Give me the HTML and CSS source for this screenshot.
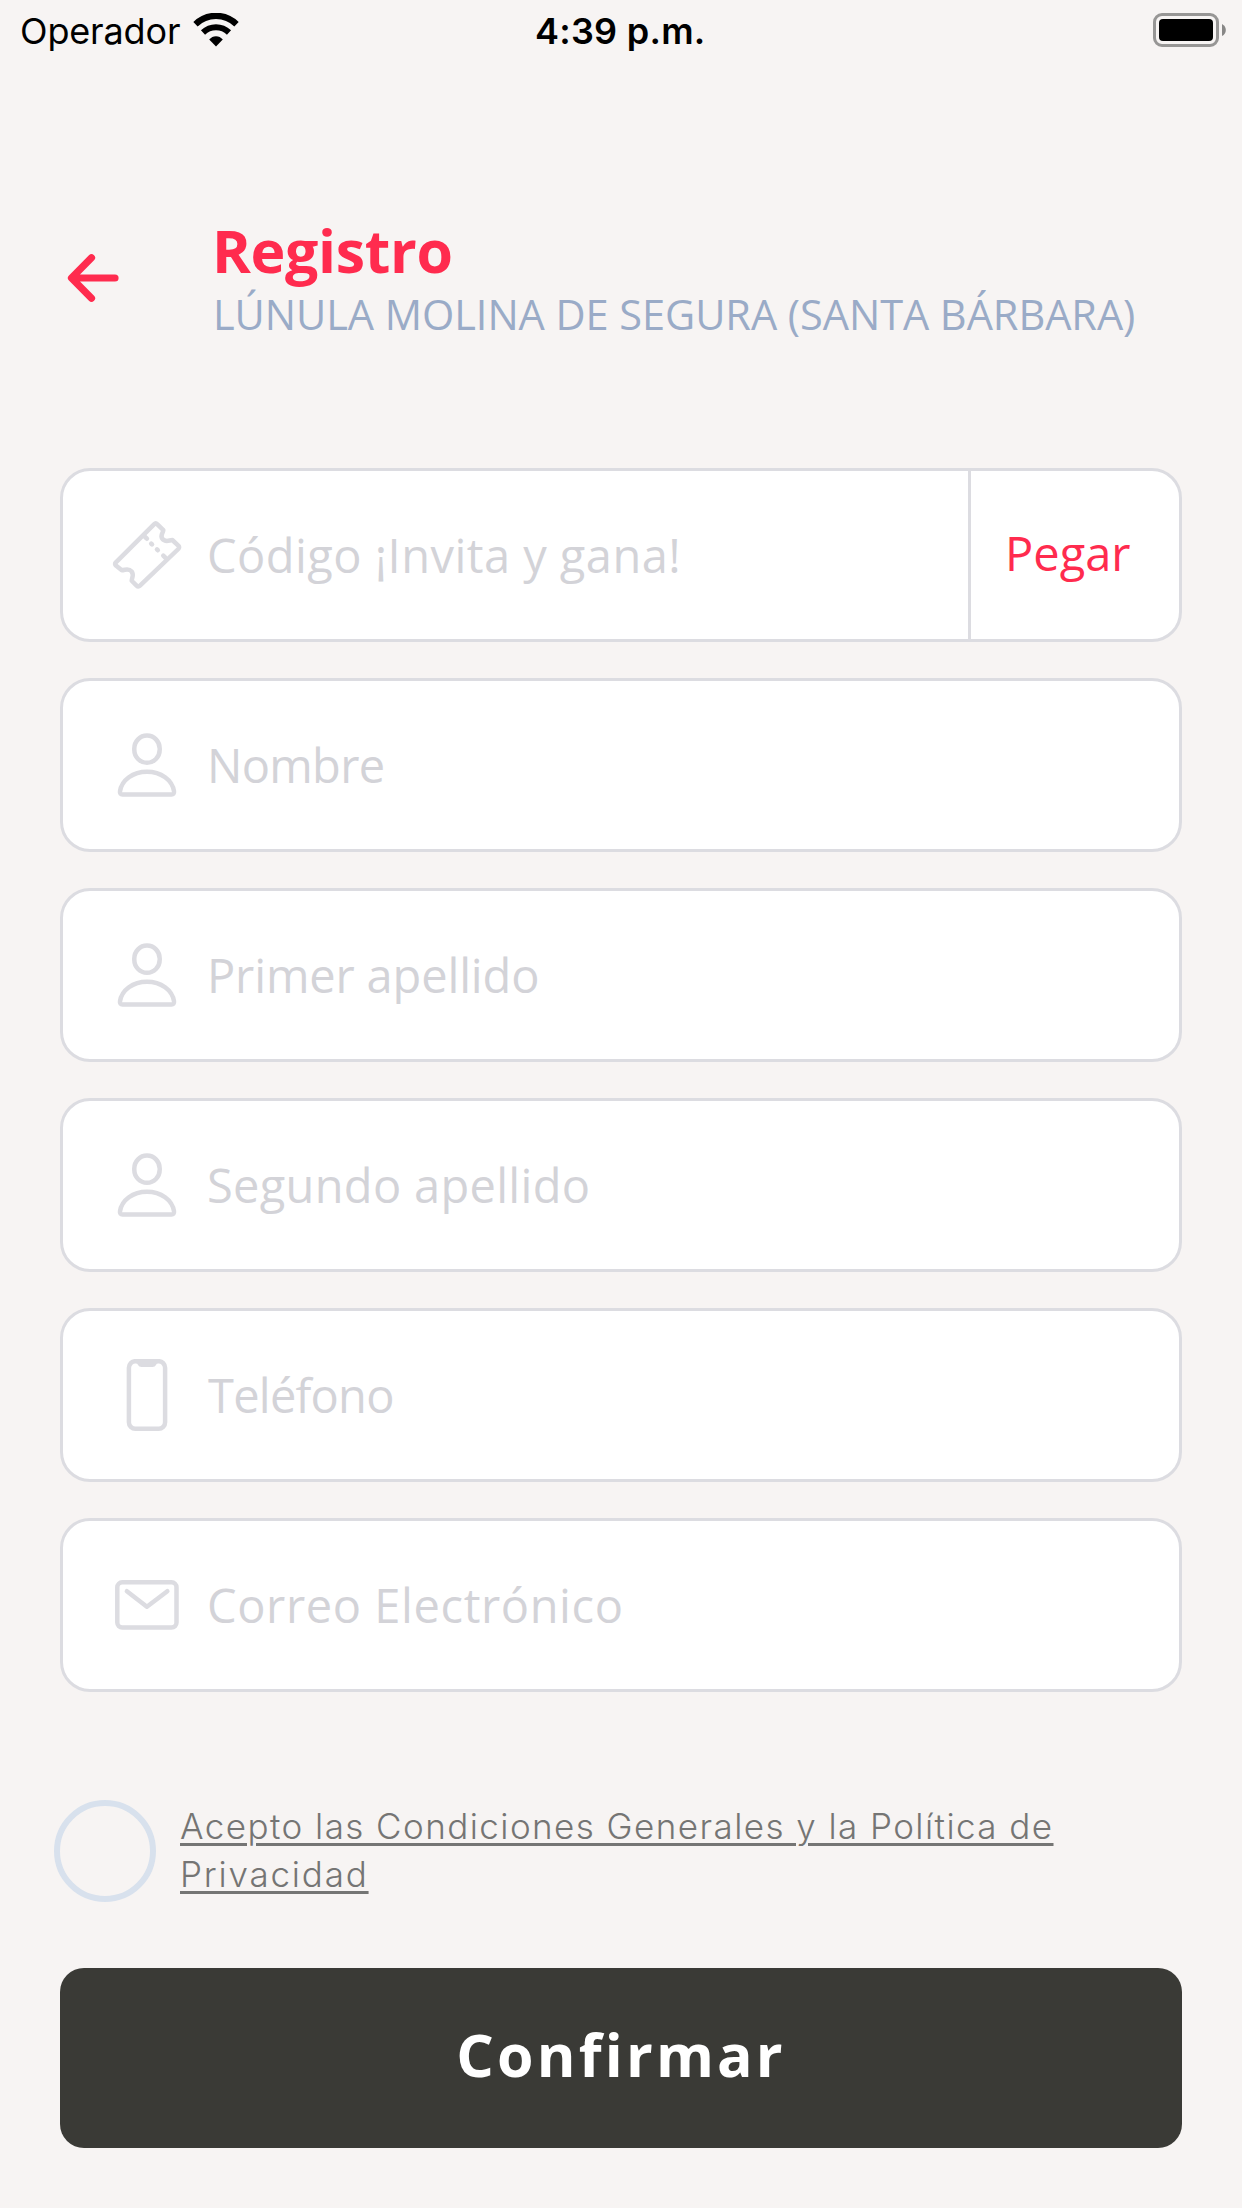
FILE: index.html
```html
<!DOCTYPE html>
<html lang="es">
<head>
<meta charset="utf-8">
<title>Registro</title>
<link rel="stylesheet" href="styles.css">
</head>
<body>
<svg class="defs" aria-hidden="true">
  <symbol id="person" viewBox="0 0 72 72">
    <rect x="23.3" y="6.6" width="25.4" height="27.2" rx="12.7" ry="13"/>
    <path d="M11.5 65.4H60.5Q63.4 65.4 63 62.3C61.3 51 50 42.7 36 42.7S10.7 51 9 62.3Q8.6 65.4 11.5 65.4Z"/>
  </symbol>
</svg>
<div class="status">
  <span class="carrier">Operador</span>
  <svg class="wifi" width="46" height="34" viewBox="0 0 46 34">
    <path d="M2.5 11.2Q11 2.8 23 2.8T43.5 11.2" fill="none" stroke="#000" stroke-width="6.2"/>
    <path d="M10 19.5Q15.5 14.3 23 14.3T36 19.5" fill="none" stroke="#000" stroke-width="6"/>
    <path d="M16.2 26.6Q19 23.2 23 23.2T29.8 26.6L23 33.4Z"/>
  </svg>
  <span class="time">4:39 p.m.</span>
  <svg class="battery" width="74" height="34" viewBox="0 0 74 34">
    <rect x="1.5" y="1.5" width="63" height="31" rx="7.5" fill="none" stroke="#979695" stroke-width="3"/>
    <rect x="6" y="6" width="54" height="22" rx="4"/>
    <path d="M69 11Q72.8 13 72.8 17T69 23Z" fill="#888786"/>
  </svg>
</div>
<header class="header">
  <svg class="back" width="56" height="56" viewBox="0 0 56 56"><path d="M27.5 7.7L7.5 28L27.5 48.3M8.5 28H51"/></svg>
  <div>
    <h1 class="title">Registro</h1>
    <p class="subtitle">LÚNULA MOLINA DE SEGURA (SANTA BÁRBARA)</p>
  </div>
</header>
<main class="form">
  <div class="field">
    <svg class="icon" viewBox="0 0 72 72">
      <path d="M43 5.300Q44.700 3.600 46.400 5.300L52.300 11.200C51.900 14.500 48.900 16 51.300 19.700C54.500 24 58 21.200 61.300 21L67.300 26.600Q68.800 28.300 67.300 30L29 66.700Q27.300 68.400 25.600 66.700L20.700 61.700C21 58 23.200 56.500 20.700 52.500C17.200 48.600 14.500 51.200 10.800 51.300L4.900 46.600Q3.400 45 4.900 43.300Z"/>
      <path d="M34 17.800L35.900 19.700M40.200 24.600L41 25.400M46 30.400L46.800 31.200M52.300 36.700L54.300 38.700" stroke-width="4.600"/>
    </svg>
    <span class="hint hint-code">Código ¡Invita y gana!</span>
    <span class="paste">Pegar</span>
  </div>
  <div class="field">
    <svg class="icon"><use href="#person"/></svg>
    <span class="hint hint-name">Nombre</span>
  </div>
  <div class="field">
    <svg class="icon"><use href="#person"/></svg>
    <span class="hint hint-first">Primer apellido</span>
  </div>
  <div class="field">
    <svg class="icon"><use href="#person"/></svg>
    <span class="hint hint-second">Segundo apellido</span>
  </div>
  <div class="field">
    <svg class="icon" viewBox="0 0 72 72">
      <rect x="17.900" y="2.200" width="36.200" height="67.500" rx="6.500"/>
      <path class="solid" d="M25 4H47Q45.500 4.600 45 6Q44 8 41.500 8H30.500Q28 8 27 6Q26.500 4.600 25 4Z"/>
    </svg>
    <span class="hint hint-phone">Teléfono</span>
  </div>
  <div class="field">
    <svg class="icon" viewBox="0 0 72 72">
      <rect x="6.300" y="13.300" width="59.200" height="45.300" rx="5"/>
      <path d="M15.900 22.200L35.900 37.700L56.300 22.200"/>
    </svg>
    <span class="hint hint-mail">Correo Electrónico</span>
  </div>
</main>
<div class="terms">
  <span class="check"></span>
  <p class="terms-text">Acepto las Condiciones Generales y la Política de<br><span class="terms-end">Privacidad</span></p>
</div>
<div class="confirm">Confirmar</div>
</body>
</html>
```

FILE: styles.css
```css
* { box-sizing: border-box; }
body {
  margin: 0;
  width: 1242px;
  height: 2208px;
  background: #f7f4f3;
  font-family: "Open Sans", "Liberation Sans", sans-serif;
  overflow: hidden;
}
h1, p { margin: 0; }
.defs { display: none; }
svg { display: block; flex: none; }

.status {
  display: grid;
  grid-template-columns: 173px 342px 618px 74px;
  align-items: start;
  height: 60px;
  padding-left: 20px;
  font: 36px/63px Inter, "Liberation Sans", sans-serif;
  color: #000;
}
.carrier { letter-spacing: -0.15px; white-space: nowrap; }
.wifi, .battery { margin-top: 13px; }
.time { font-weight: 600; letter-spacing: 0.25px; }

.header {
  display: flex;
  height: 408px;
  padding: 160px 0 0 64px;
}
.back { margin: 30px 92px 0 0; }
.back path {
  fill: none;
  stroke: #ff2b4e;
  stroke-width: 7.2;
  stroke-linecap: round;
  stroke-linejoin: round;
}
.title {
  font-size: 59px;
  font-weight: 700;
  line-height: 60px;
  letter-spacing: -0.35px;
  color: #ff2b4e;
}
.subtitle {
  margin-top: 6px;
  padding-left: 1px;
  font-size: 41.5px;
  line-height: 56px;
  letter-spacing: -0.05px;
  white-space: nowrap;
  color: #9aabc7;
}

.form {
  display: flex;
  flex-direction: column;
  gap: 36px;
  margin: 0 60px;
}
.field {
  display: flex;
  align-items: center;
  height: 174px;
  padding-left: 48px;
  border: 3px solid #dcdce1;
  border-radius: 30px;
  background: #fff;
}
.icon {
  width: 72px;
  height: 72px;
  margin-right: 24px;
  fill: none;
  stroke: #dcdce1;
  stroke-width: 4.5;
  stroke-linecap: round;
  stroke-linejoin: round;
}
.solid { fill: #dcdce1; stroke: none; }
.hint {
  flex: 1;
  font-size: 47px;
  line-height: 64px;
  white-space: nowrap;
  color: #d3d3d8;
}
.hint-code { letter-spacing: 0.46px; }
.hint-name { letter-spacing: -0.7px; }
.hint-first { letter-spacing: -0.15px; }
.hint-second { letter-spacing: 0.3px; }
.hint-phone { letter-spacing: -0.75px; padding-left: 1px; }
.hint-mail { letter-spacing: 0.6px; }
.paste {
  width: 211px;
  height: 168px;
  padding-left: 34px;
  border-left: 3px solid #dcdce1;
  font-size: 47px;
  line-height: 164px;
  color: #ff2b4e;
}

.terms {
  display: flex;
  gap: 24px;
  height: 168px;
  margin: 108px 0 0 54px;
}
.check {
  width: 102px;
  height: 102px;
  border: 6px solid #d8e1ed;
  border-radius: 50%;
}
.terms-text {
  padding-top: 2px;
  font: 300 35px/48px Inter, "Liberation Sans", sans-serif;
  letter-spacing: 1.43px;
  color: #757574;
  text-decoration: underline;
  text-decoration-thickness: 3px;
  text-underline-offset: 4px;
  white-space: nowrap;
}
.terms-end { letter-spacing: 1.8px; }

.confirm {
  height: 180px;
  margin: 0 60px;
  border-radius: 24px;
  background: #3a3a36;
  font-size: 59px;
  font-weight: 700;
  line-height: 172px;
  letter-spacing: 3.2px;
  text-align: center;
  color: #fff;
}
```
